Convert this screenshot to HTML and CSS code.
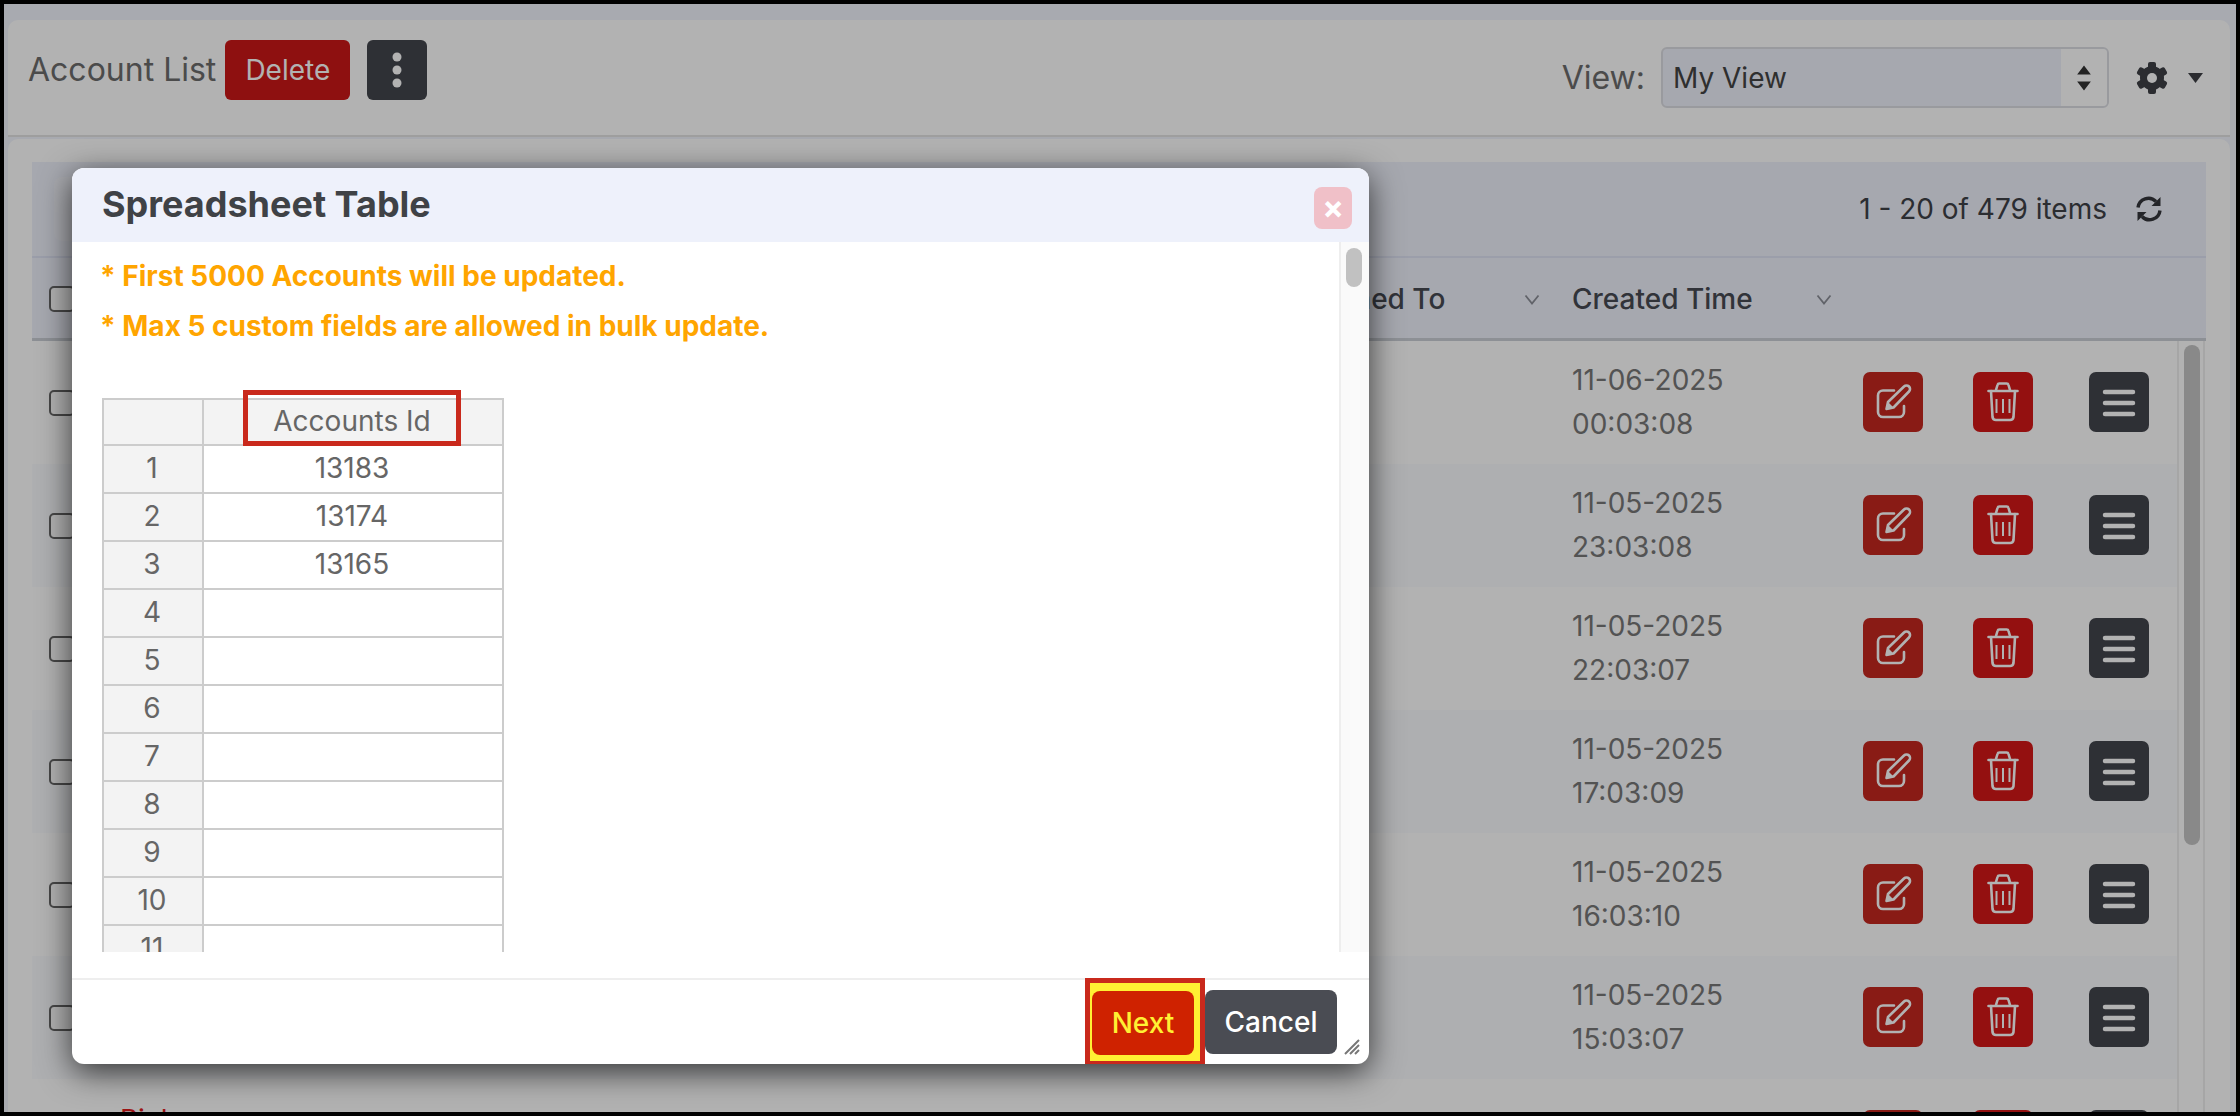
FILE: index.html
```html
<!DOCTYPE html>
<html lang="en">
<head>
<meta charset="utf-8">
<title>Account List</title>
<link rel="stylesheet" href="styles.css">
</head>
<body>
<svg class="defs" width="0" height="0" aria-hidden="true">
  <symbol id="i-edit" viewBox="0 0 60 60"><g fill="none" stroke="currentColor" stroke-width="2.600" stroke-linecap="round" stroke-linejoin="round"><path d="M31 18.500H20a5 5 0 0 0-5 5V40a5 5 0 0 0 5 5h16a5 5 0 0 0 5-5v-6"/><path d="M23.500 37l1.500-7L41 14.500a3.500 3.500 0 0 1 5 5L30.500 35.500z"/></g><path d="M23.500 37l1.500-7 5.500 5.500z" fill="currentColor"/></symbol>
  <symbol id="i-trash" viewBox="0 0 60 60"><g fill="none" stroke="currentColor" stroke-width="2.600" stroke-linecap="round" stroke-linejoin="round"><path d="M15.500 19h29"/><path d="M23 18l1.500-5a2 2 0 0 1 2-1.500h7a2 2 0 0 1 2 1.500l1.500 5"/><path d="M18 19l1.500 26a3.500 3.500 0 0 0 3.500 3h14a3.500 3.500 0 0 0 3.500-3L42 19"/></g><path d="M23.500 27v14M30 27v14M36.500 27v14" stroke="currentColor" stroke-width="2" fill="none"/></symbol>
  <symbol id="i-menu" viewBox="0 0 60 60"><path d="M16 20h28M16 31h28M16 42h28" stroke="currentColor" stroke-width="4.500" stroke-linecap="round" fill="none"/></symbol>
  <symbol id="i-chev" viewBox="0 0 16 11"><path d="M1.500 1.500L8 9.500l6.500-8" fill="none" stroke="currentColor" stroke-width="1.800"/></symbol>
</svg>
<div class="frame">
  <header class="card top">
    <div class="top-left">
      <span class="page-title">Account List</span>
      <button class="btn btn-delete">Delete</button>
      <button class="btn btn-kebab" aria-label="More"><svg width="10" height="36" viewBox="0 0 10 36"><circle cx="5" cy="5" r="4.500" fill="currentColor"/><circle cx="5" cy="18" r="4.500" fill="currentColor"/><circle cx="5" cy="31" r="4.500" fill="currentColor"/></svg></button>
    </div>
    <div class="top-right">
      <span class="view-label">View:</span>
      <div class="select"><span class="select-value">My View</span><span class="select-arrows"><svg width="16" height="28" viewBox="0 0 14 24"><path d="M7 1l6 8H1zM7 23l6-8H1z" fill="currentColor"/></svg></span></div>
      <svg class="gear" width="32" height="32" viewBox="0 0 32 32"><g fill="currentColor"><rect x="12" y="0" width="8" height="32" rx="2"/><rect x="12" y="0" width="8" height="32" rx="2" transform="rotate(60 16 16)"/><rect x="12" y="0" width="8" height="32" rx="2" transform="rotate(120 16 16)"/></g><circle cx="16" cy="16" r="9.500" fill="none" stroke="currentColor" stroke-width="5"/><circle cx="16" cy="16" r="5" fill="#fff" /></svg>
      <svg class="caret" width="15" height="10" viewBox="0 0 15 10"><path d="M0 0h15L7.500 10z" fill="currentColor"/></svg>
    </div>
  </header>
  <main class="card list">
    <div class="toolbar">
      <span class="toolbar-box"></span>
      <span class="count">1 - 20 of 479 items</span>
      <svg class="sync" width="28" height="26" viewBox="0 0 28 26"><g fill="none" stroke="currentColor" stroke-width="3.400"><path d="M3 11.500A10.500 10.500 0 0 1 21 5.500"/><path d="M25 14.500A10.500 10.500 0 0 1 7 20.500"/></g><path d="M25.500 1v9h-9zM2.500 25v-9h9z" fill="currentColor"/></svg>
    </div>
    <div class="head">
      <span class="check"></span>
      <span class="head-cell assigned">Assigned To<svg class="chev" width="16" height="11"><use href="#i-chev"/></svg></span>
      <span class="head-cell created">Created Time<svg class="chev" width="16" height="11"><use href="#i-chev"/></svg></span>
    </div>
    <div class="body-wrap">
      <div class="rows">
        <div class="row"><span class="check"></span><span class="when">11-06-2025<br>00:03:08</span><div class="actions"><button class="act act-edit" aria-label="Edit"><svg width="60" height="60"><use href="#i-edit"/></svg></button><button class="act act-del" aria-label="Delete"><svg width="60" height="60"><use href="#i-trash"/></svg></button><button class="act act-menu" aria-label="Menu"><svg width="60" height="60"><use href="#i-menu"/></svg></button></div></div>
        <div class="row"><span class="check"></span><span class="when">11-05-2025<br>23:03:08</span><div class="actions"><button class="act act-edit" aria-label="Edit"><svg width="60" height="60"><use href="#i-edit"/></svg></button><button class="act act-del" aria-label="Delete"><svg width="60" height="60"><use href="#i-trash"/></svg></button><button class="act act-menu" aria-label="Menu"><svg width="60" height="60"><use href="#i-menu"/></svg></button></div></div>
        <div class="row"><span class="check"></span><span class="when">11-05-2025<br>22:03:07</span><div class="actions"><button class="act act-edit" aria-label="Edit"><svg width="60" height="60"><use href="#i-edit"/></svg></button><button class="act act-del" aria-label="Delete"><svg width="60" height="60"><use href="#i-trash"/></svg></button><button class="act act-menu" aria-label="Menu"><svg width="60" height="60"><use href="#i-menu"/></svg></button></div></div>
        <div class="row"><span class="check"></span><span class="when">11-05-2025<br>17:03:09</span><div class="actions"><button class="act act-edit" aria-label="Edit"><svg width="60" height="60"><use href="#i-edit"/></svg></button><button class="act act-del" aria-label="Delete"><svg width="60" height="60"><use href="#i-trash"/></svg></button><button class="act act-menu" aria-label="Menu"><svg width="60" height="60"><use href="#i-menu"/></svg></button></div></div>
        <div class="row"><span class="check"></span><span class="when">11-05-2025<br>16:03:10</span><div class="actions"><button class="act act-edit" aria-label="Edit"><svg width="60" height="60"><use href="#i-edit"/></svg></button><button class="act act-del" aria-label="Delete"><svg width="60" height="60"><use href="#i-trash"/></svg></button><button class="act act-menu" aria-label="Menu"><svg width="60" height="60"><use href="#i-menu"/></svg></button></div></div>
        <div class="row"><span class="check"></span><span class="when">11-05-2025<br>15:03:07</span><div class="actions"><button class="act act-edit" aria-label="Edit"><svg width="60" height="60"><use href="#i-edit"/></svg></button><button class="act act-del" aria-label="Delete"><svg width="60" height="60"><use href="#i-trash"/></svg></button><button class="act act-menu" aria-label="Menu"><svg width="60" height="60"><use href="#i-menu"/></svg></button></div></div>
        <div class="row"><span class="pick">Pickup</span><span class="when"></span><div class="actions"><button class="act act-edit" aria-label="Edit"></button><button class="act act-del" aria-label="Delete"></button><button class="act act-menu" aria-label="Menu"></button></div></div>
      </div>
      <div class="vbar"><span class="vthumb"></span></div>
    </div>
  </main>
  <div class="overlay"></div>
  <section class="modal">
    <div class="modal-head">
      <h2 class="modal-title">Spreadsheet Table</h2>
      <button class="modal-close" aria-label="Close">×</button>
    </div>
    <div class="modal-body">
      <div class="modal-content">
        <p class="note">* First 5000 Accounts will be updated.</p>
        <p class="note">* Max 5 custom fields are allowed in bulk update.</p>
        <div class="sheet-wrap">
          <table class="sheet">
            <tr class="sheet-head"><th class="idx"></th><th class="col">Accounts Id</th></tr>
            <tr><th class="idx">1</th><td>13183</td></tr>
            <tr><th class="idx">2</th><td>13174</td></tr>
            <tr><th class="idx">3</th><td>13165</td></tr>
            <tr><th class="idx">4</th><td></td></tr>
            <tr><th class="idx">5</th><td></td></tr>
            <tr><th class="idx">6</th><td></td></tr>
            <tr><th class="idx">7</th><td></td></tr>
            <tr><th class="idx">8</th><td></td></tr>
            <tr><th class="idx">9</th><td></td></tr>
            <tr><th class="idx">10</th><td></td></tr>
            <tr><th class="idx">11</th><td></td></tr>
            <tr><th class="idx">12</th><td></td></tr>
          </table>
          <span class="mark"></span>
        </div>
      </div>
      <div class="modal-scroll"><span class="modal-thumb"></span></div>
    </div>
    <div class="modal-foot">
      <div class="next-mark"><button class="btn-next">Next</button></div>
      <button class="btn-cancel">Cancel</button>
    </div>
    <svg class="grip" width="17" height="17" viewBox="0 0 17 17"><path d="M16 2L2 16M16 7L7 16M16 12l-4 4" stroke="#777" stroke-width="2" fill="none"/></svg>
  </section>
</div>
</body>
</html>
```
FILE: styles.css
```css
* { box-sizing: border-box; }
html, body { margin: 0; padding: 0; height: 100%; background: #000; }
body { font-family: Inter, "Liberation Sans", sans-serif; overflow: hidden; }
button { font-family: inherit; border: 0; padding: 0; }
.defs { position: absolute; }

.frame {
  position: relative;
  width: 2240px;
  height: 1116px;
  border: 4px solid #000;
  padding: 16px 6px 0 4px;
  background: #f1f4fc;
  display: flex;
  flex-direction: column;
  overflow: hidden;
}
.card { background: #fff; border-radius: 10px 10px 0 0; }

.top {
  flex: none;
  height: 117px;
  display: flex;
  align-items: center;
  justify-content: space-between;
  padding: 0 27px 0 20px;
  border-bottom: 2px solid #e2e2e2;
  border-radius: 10px 10px 0 0;
}
.top-left { display: flex; align-items: center; gap: 9px; margin-top: -16px; }
.page-title { font-size: 32px; color: #6c6c6c; }
.btn {
  height: 60px;
  border-radius: 6px;
  color: #fff;
  font-size: 28px;
  display: flex;
  align-items: center;
  justify-content: center;
}
.btn-delete { width: 125px; background: #cc1717; }
.btn-kebab { width: 60px; margin-left: 8px; background: #42454c; }
.top-right { display: flex; align-items: center; }
.view-label { font-size: 32px; color: #6c6c6c; margin-right: 16px; }
.select {
  width: 448px;
  height: 61px;
  border: 2px solid #dcdde2;
  border-radius: 6px;
  background: #eef1fb;
  display: flex;
  align-items: center;
  font-size: 28px;
  color: #444;
  overflow: hidden;
}
.select-value { flex: 1; padding-left: 10px; }
.select-arrows {
  flex: none;
  width: 46px;
  height: 100%;
  background: #fff;
  color: #333;
  display: flex;
  align-items: center;
  justify-content: center;
}
.gear { margin-left: 27px; color: #3e4046; }
.caret { margin-left: 20px; color: #3e4046; }

.list {
  margin-top: 2px;
  flex: 1;
  min-height: 0;
  padding: 23px 24px 0;
  display: flex;
  flex-direction: column;
  overflow: hidden;
}
.toolbar {
  flex: none;
  height: 96px;
  background: #eef1fb;
  border-bottom: 2px solid #dfe2f4;
  display: flex;
  align-items: center;
  justify-content: flex-end;
  padding-right: 43px;
  position: relative;
}
.toolbar-box { margin-right: auto; margin-left: 22px; width: 200px; height: 64px; border-radius: 8px; background: #f2f4fb; }
.count { font-size: 28px; color: #3e4147; margin-right: 28px; }
.sync { color: #34363b; }
.head {
  flex: none;
  height: 83px;
  padding-top: 2px;
  background: #eef1fb;
  border-bottom: 3px solid #cbced6;
  display: grid;
  grid-template-columns: 1248px 292px 260px;
  align-items: center;
}
.head-cell {
  font-size: 28px;
  color: #474a52;
  display: flex;
  align-items: center;
  justify-content: space-between;
  font-weight: 500;
}
.assigned { padding-right: 32px; }
.chev { color: #8b8e97; }
.check {
  width: 26px;
  height: 26px;
  margin-left: 17px;
  border: 2px solid #666;
  border-radius: 5px;
  background: #fff;
  display: block;
}
.body-wrap { flex: 1; min-height: 0; display: flex; overflow: hidden; }
.rows { width: 2145px; flex: none; }
.row {
  height: 123px;
  display: grid;
  grid-template-columns: 1540px 291px auto;
  align-items: center;
}
.row:nth-child(even) { background: #f9fbfe; }
.pick { font-size: 28px; color: #e01e1e; padding-left: 88px; align-self: start; margin-top: 24px; }
.when { font-size: 28px; line-height: 44px; color: #777; margin-top: -2px; }
.actions { display: flex; margin-bottom: 1px; }
.act { width: 60px; height: 60px; border-radius: 7px; color: #fff; display: block; }
.act svg { display: block; }
.act-edit { background: #c4271f; }
.act-del { background: #d41717; margin-left: 50px; }
.act-menu { background: #42454c; margin-left: 56px; }
.vbar { width: 28px; flex: none; border-left: 2px solid #eee; border-right: 2px solid #eee; padding: 4px 5px 0; }
.vthumb { display: block; width: 16px; height: 500px; border-radius: 8px; background: #c4c4c4; }

.overlay { position: absolute; inset: 0; background: rgba(0, 0, 0, .3); }

.modal {
  position: absolute;
  left: 68px;
  top: 164px;
  width: 1297px;
  height: 896px;
  background: #fff;
  border-radius: 12px;
  box-shadow: 0 8px 32px rgba(0, 0, 0, .7);
  display: flex;
  flex-direction: column;
  overflow: hidden;
}
.modal-head {
  flex: none;
  height: 74px;
  background: #eef1fb;
  display: flex;
  align-items: center;
  justify-content: space-between;
  padding: 0 17px 0 30px;
}
.modal-title { margin: -2px 0 0; font-size: 36px; font-weight: 700; color: #3f4246; }
.modal-close {
  width: 38px;
  height: 42px;
  border-radius: 8px;
  background: #f0c0c8;
  color: #fff;
  font-size: 32px;
  font-weight: 700;
  line-height: 42px;
  margin-top: 6px;
}
.modal-body { flex: none; height: 710px; display: flex; overflow: hidden; }
.modal-content { flex: 1; padding: 16px 0 0 30px; min-width: 0; }
.note { margin: 0 0 14px -2px; font-size: 28px; line-height: 36px; font-weight: 700; color: #ffa500; }
.sheet-wrap { position: relative; margin-top: 54px; width: 402px; }
.sheet { border-collapse: collapse; table-layout: fixed; width: 402px; font-size: 28px; color: #666; }
.sheet th, .sheet td { border: 2px solid #ccc; height: 48px; padding: 0 2px 2px 0; text-align: center; font-weight: 400; }
.sheet .sheet-head th { height: 46px; }
.sheet .idx { width: 100px; background: #f3f3f3; }
.sheet .col { background: #f3f3f3; }
.mark {
  position: absolute;
  left: 141px;
  top: -8px;
  width: 218px;
  height: 56px;
  border: 5px solid #c9291c;
}
.modal-scroll { flex: none; width: 30px; background: #fafafa; border-left: 2px solid #eee; padding: 6px 5px 0; }
.modal-thumb { display: block; width: 16px; height: 39px; border-radius: 8px; background: #c1c1c1; }
.modal-foot {
  flex: none;
  margin-top: 26px;
  height: 86px;
  border-top: 2px solid #eee;
  display: flex;
  justify-content: flex-end;
  align-items: flex-start;
  padding-right: 32px;
}
.next-mark {
  margin-top: -2px;
  width: 120px;
  height: 88px;
  border: 5px solid #c9291c;
  background: #fff033;
  padding: 8px 6px 6px 2px;
}
.btn-next {
  display: block;
  width: 102px;
  height: 64px;
  border-radius: 8px;
  background: #cf2200;
  color: #fff033;
  font-size: 28px;
  font-weight: 500;
}
.btn-cancel {
  margin-top: 10px;
  width: 132px;
  height: 64px;
  border-radius: 8px;
  background: #4a4c53;
  color: #fff;
  font-size: 28px;
  font-weight: 500;
}
.grip { position: absolute; right: 9px; bottom: 9px; }
```
